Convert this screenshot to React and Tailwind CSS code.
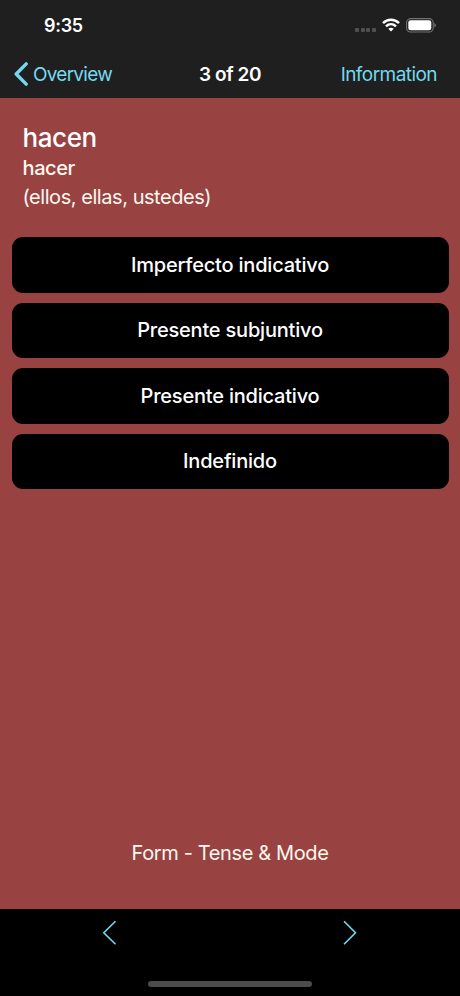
const answers = [
  'Imperfecto indicativo',
  'Presente subjuntivo',
  'Presente indicativo',
  'Indefinido',
];

function StatusBar() {
  return (
    <div className="flex h-[50px] items-center justify-between pl-[44px] pr-[24px]">
      <span className="pt-[2px] text-[18px] font-semibold leading-[22px] tracking-[-0.3px]">9:35</span>
      <div className="flex items-center">
        <div className="mr-[6px] mt-[9px] flex gap-[1.7px]">
          {[0, 1, 2, 3].map((dot) => (
            <span key={dot} className="h-[4px] w-[4px] rounded-[1px] bg-[#505050]" />
          ))}
        </div>
        <svg width="18" height="14" viewBox="0 0 18 14" className="mr-[6px]" fill="none" stroke="#fff" strokeWidth="2.5">
          <path d="M1 5.2C5.6.7 12.4.7 17 5.2" />
          <path d="M4 8.4C6.9 5.6 11.1 5.6 14 8.4" />
          <path d="M6.3 10.8C7.8 9.3 10.2 9.3 11.7 10.8L9 13.6Z" fill="#fff" stroke="none" />
        </svg>
        <svg width="30" height="15" viewBox="0 0 30 15">
          <rect x=".6" y=".6" width="26.6" height="13.4" rx="4" fill="none" stroke="#717171" strokeWidth="1.1" />
          <rect x="2.3" y="2.3" width="23" height="10" rx="2.3" fill="#fff" />
          <path d="M28.4 5.1Q29.8 5.8 29.8 7.3T28.4 9.5Z" fill="#777" />
        </svg>
      </div>
    </div>
  );
}

function NavBar() {
  return (
    <div className="grid h-[48px] grid-cols-3 items-center pl-[14px] pr-[23px] text-[19px] leading-[24px]">
      <button className="flex items-center text-[#74d9ee]">
        <svg width="15" height="24" viewBox="0 0 15 24" className="mr-[4px] shrink-0" fill="none" stroke="currentColor" strokeWidth="3.4" strokeLinecap="round" strokeLinejoin="round">
          <path d="M12.2 1.9L2.2 12L12.2 22.1" />
        </svg>
        <span className="pt-px tracking-[-0.75px]">Overview</span>
      </button>
      <h1 className="ml-[9px] whitespace-nowrap pt-px text-center font-semibold tracking-[-0.4px]">3 of 20</h1>
      <button className="pt-px text-right tracking-[-0.55px] text-[#74d9ee]">Information</button>
    </div>
  );
}

export default function App() {
  return (
    <div className="flex h-[996px] w-[460px] flex-col overflow-hidden bg-black font-['Inter',sans-serif] text-white">
      <header className="h-[98px] shrink-0 bg-[#1f1f1f]">
        <StatusBar />
        <NavBar />
      </header>
      <main className="flex h-[811px] flex-col bg-[#984242] px-[11.5px] pt-[24px]">
        <section className="flex h-[115px] flex-col items-start pl-[11px] text-[#fff8ef]">
          <h2 className="text-[26px] font-medium leading-[32px] tracking-[-0.4px] text-white">hacen</h2>
          <p className="text-[20px] font-medium leading-[28px] tracking-[-0.4px]">hacer</p>
          <p className="text-[20px] leading-[30px] tracking-[-0.45px]">(ellos, ellas, ustedes)</p>
        </section>
        <div className="flex flex-col gap-[10px]">
          {answers.map((label) => (
            <button key={label} className="h-[55.5px] rounded-[11px] bg-black text-[20px] font-medium tracking-[-0.2px]">
              {label}
            </button>
          ))}
        </div>
        <p className="mb-[43px] mt-auto text-center text-[20px] leading-[26px] tracking-[-0.37px] text-[#fff8ef]">
          Form - Tense &amp; Mode
        </p>
      </main>
      <footer className="flex h-[87px] flex-col justify-between pb-[9px] pt-[11px]">
        <div className="flex justify-between pl-[102px] pr-[103px] text-[#74d9ee]">
          <svg width="15" height="26" viewBox="0 0 15 26" fill="none" stroke="currentColor" strokeWidth="1.6">
            <path d="M13.5 1.2L1.8 12.8L13.5 24.3" />
          </svg>
          <svg width="15" height="26" viewBox="0 0 15 26" fill="none" stroke="currentColor" strokeWidth="1.6">
            <path d="M2 1.2L13.5 12.8L2 24.3" />
          </svg>
        </div>
        <div className="h-[6px] w-[164px] self-center rounded-full bg-[#4c4c4c]" />
      </footer>
    </div>
  );
}
